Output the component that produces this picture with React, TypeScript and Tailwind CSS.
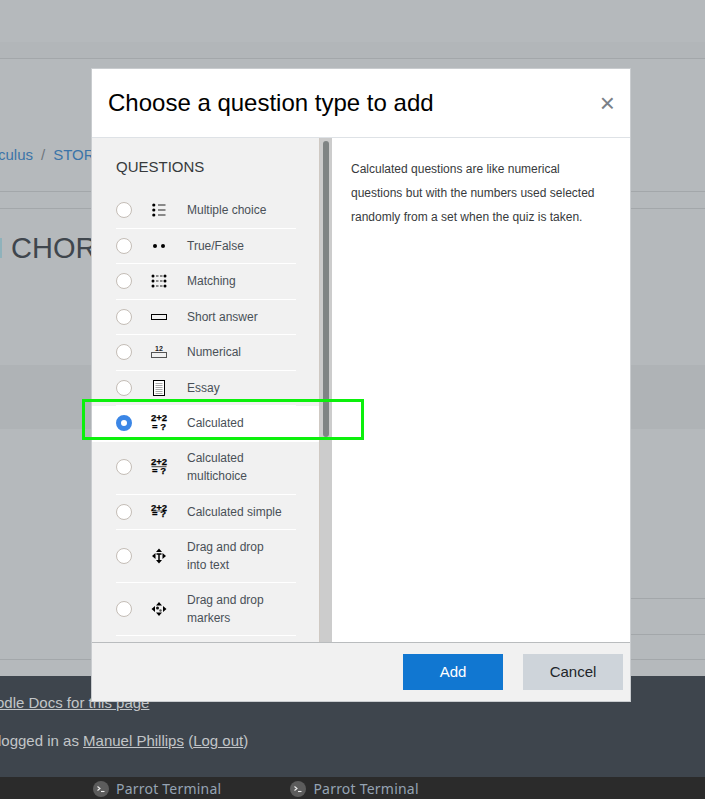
import React from "react";

const F = "font-['Liberation_Sans',Arial,sans-serif]";

function CalcIcon({ variant }: { variant: "plain" | "multi" | "simple" }) {
  const t = { fontSize: 9.5, fontWeight: 700, fontFamily: "Liberation Sans", fill: "#000", stroke: "#000", strokeWidth: 0.25 };
  return (
    <svg width="18" height="18" viewBox="0 0 18 18" className="-mx-px shrink-0">
      <text x="9" y={variant === "simple" ? 7.5 : 7} textAnchor="middle" {...t}>2+2</text>
      {variant === "multi" && <rect x="1.5" y="8.2" width="15" height="1" fill="#444" />}
      <text x="9" y={variant === "simple" ? 14 : 16} textAnchor="middle" {...t}>= ?</text>
      {variant === "simple" && <rect x="3" y="7.5" width="10" height="1" fill="#666" />}
    </svg>
  );
}

const Box = ({ children }: { children: React.ReactNode }) => (
  <svg width="16" height="16" viewBox="0 0 16 16" className="shrink-0">{children}</svg>
);

const icons: Record<string, React.ReactNode> = {
  mc: (
    <Box>
      <circle cx="2.8" cy="3" r="1.6" fill="#000" /><circle cx="2.8" cy="8" r="1.6" fill="#000" /><circle cx="2.8" cy="13" r="1.6" fill="#000" />
      <rect x="7" y="2.5" width="7.5" height="1" fill="#222" /><rect x="7" y="7.5" width="7.5" height="1" fill="#222" /><rect x="7" y="12.5" width="7.5" height="1" fill="#222" />
    </Box>
  ),
  tf: (
    <Box>
      <circle cx="4" cy="8" r="2" fill="#000" /><circle cx="12" cy="8" r="2" fill="#000" />
    </Box>
  ),
  match: (
    <Box>
      {[3, 8, 13].map((y) => (
        <g key={y}>
          <circle cx="2" cy={y} r="1.5" fill="#000" /><circle cx="14" cy={y} r="1.5" fill="#000" />
          <rect x="5" y={y - 0.5} width="2.5" height="1" fill="#222" /><rect x="9" y={y - 0.5} width="2.5" height="1" fill="#222" />
        </g>
      ))}
    </Box>
  ),
  short: (
    <Box>
      <rect x="0.5" y="5.5" width="15" height="5" fill="none" stroke="#000" />
    </Box>
  ),
  num: (
    <Box>
      <text x="8" y="6.5" textAnchor="middle" fontSize="7" fontWeight="700" fontFamily="Liberation Sans" fill="#222">12</text>
      <rect x="0.5" y="8.5" width="15" height="5" fill="none" stroke="#555" />
    </Box>
  ),
  essay: (
    <Box>
      <rect x="2.5" y="0.5" width="11" height="15" fill="#fff" stroke="#000" />
      {[3, 5, 7, 9, 11, 13].map((y) => (
        <rect key={y} x="4.5" y={y} width="7" height="1" fill="#aaa" />
      ))}
    </Box>
  ),
  ddtext: (
    <Box>
      <path d="M8 0.5 11 4H5zM8 15.500 5 12h6zM1 8l3.500-3v6zM15 8l-3.500-3v6z" fill="#000" />
      <path d="M5.500 6h5M8 6v6" stroke="#000" strokeWidth="1.500" fill="none" />
    </Box>
  ),
  ddmark: (
    <Box>
      <path d="M8 1 11 4.500H5zM8 15l-3-3.500h6zM.5 8 4 5v6zM15.500 8 12 5v6z" fill="#000" />
      <circle cx="6.500" cy="7" r="1.500" fill="#111" /><circle cx="9.500" cy="9.500" r="1.200" fill="#555" />
    </Box>
  ),
  c1: <CalcIcon variant="plain" />,
  c2: <CalcIcon variant="multi" />,
  c3: <CalcIcon variant="simple" />,
};

const rows: { icon: string; label: React.ReactNode; selected?: boolean; two?: boolean }[] = [
  { icon: "mc", label: "Multiple choice" },
  { icon: "tf", label: "True/False" },
  { icon: "match", label: "Matching" },
  { icon: "short", label: "Short answer" },
  { icon: "num", label: "Numerical" },
  { icon: "essay", label: "Essay" },
  { icon: "c1", label: "Calculated", selected: true },
  { icon: "c2", label: <>Calculated<br />multichoice</>, two: true },
  { icon: "c3", label: "Calculated simple" },
  { icon: "ddtext", label: <>Drag and drop<br />into text</>, two: true },
  { icon: "ddmark", label: <>Drag and drop<br />markers</>, two: true },
];

function Row({ icon, label, selected, two }: { icon: string; label: React.ReactNode; selected?: boolean; two?: boolean }) {
  return (
    <div className={selected ? "bg-white pl-6" : "pl-6"}>
      <div className={`flex w-[180px] items-center border-b border-white ${two ? "pt-[7.5px] pb-[8.5px]" : "py-[8.25px]"}`}>
        {selected ? (
          <span className="box-border size-4 shrink-0 rounded-full border-[5px] border-[#3b86e6] bg-white" />
        ) : (
          <span className="box-border size-4 shrink-0 rounded-full border border-[#c4bdb6] bg-white" />
        )}
        <span className="ml-[19px] flex size-4 shrink-0 items-center justify-center">{icons[icon]}</span>
        <span className="ml-5 text-[12px] leading-[18px] text-[#495057]">{label}</span>
      </div>
    </div>
  );
}

function Task({ className }: { className?: string }) {
  return (
    <div className={`flex items-center ${className ?? ""}`}>
      <svg width="16" height="16" viewBox="0 0 16 16">
        <circle cx="8" cy="8" r="8" fill="#5c5c5c" />
        <path d="M4.500 5.500 7 7.500 4.500 9.500" stroke="#eee" strokeWidth="1.100" fill="none" />
        <path d="M8 10.500h3.500" stroke="#eee" strokeWidth="1.100" />
      </svg>
      <span className="ml-[7px] font-['Noto_Sans',sans-serif] text-[14px] leading-[22px] tracking-[0.22px] text-[#95a3b3]">Parrot Terminal</span>
    </div>
  );
}

export default function App() {
  return (
    <div className={`relative h-[799px] w-[705px] overflow-hidden bg-[#b5b9bc] ${F}`}>
      {/* Page behind the dialog */}
      <div className="h-[42px]" />
      <div className="h-[17px] border-b border-[#a3a7aa] bg-[#b2b6b9]" />
      <div className="flex h-[133px] items-end whitespace-nowrap border-b border-[#a3a7aa] pb-[25px] text-[15px] leading-[22px] text-[#3b74a8]">
        <span className="-ml-[2px]">culus</span>
        <span className="mx-2 text-[#6f767c]">/</span>
        <span>STORY</span>
      </div>
      <div className="h-[17px] border-b border-[#a3a7aa]" />
      <div className="flex h-[156px] items-start pt-[21px]">
        <span className="h-[20px] w-[2px] translate-y-[8px] bg-[#8fb2bb]" />
        <span className="ml-[9px] text-[29px] leading-[36px] text-[#3f464d]">CHORD</span>
      </div>
      <div className="h-[64px] bg-[#afb3b6]" />
      <div className="h-[169px]" />
      <div className="ml-auto h-[37px] w-[300px] border-t border-b border-[#a3a7aa]" />
      <div className="h-[25px] border-b border-[#a3a7aa]" />
      <div className="h-[16px]" />
      <div className="h-[101px] whitespace-nowrap bg-[#3e454d] text-[15px] text-[#c2c5c8]">
        <div className="pt-[16px] leading-[22px]">
          <span className="-ml-[4px] underline">odle Docs for this page</span>
        </div>
        <div className="pt-[16px] leading-[22px]">
          <span className="-ml-[2px]">logged in as </span>
          <span className="underline">Manuel Phillips</span> (<span className="underline">Log out</span>)
        </div>
      </div>
      <div className="flex h-[22px] bg-[#2b2b2b] pl-[93px] pt-px">
        <Task />
        <Task className="ml-[69px]" />
      </div>

      {/* Dialog */}
      <div className="absolute left-[91px] top-[68px] flex h-[634px] w-[540px] flex-col border border-[#c9cccf] bg-white">
        <div className="flex h-[69px] shrink-0 items-center justify-between border-b border-[#dee2e6] pl-4 pr-[15px]">
          <h2 className="text-[24px] leading-[30px] text-black">Choose a question type to add</h2>
          <span className="text-[26px] leading-[28px] text-[#7a8087]">×</span>
        </div>
        <div className="flex min-h-0 flex-1">
          <div className="w-[228px] shrink-0 overflow-hidden border-r border-[#cfc9c3] bg-[#f1f1f1]">
            <div className="pl-6 pt-[18px] pb-[15px] text-[15px] leading-[22px] text-[#373a3c]">QUESTIONS</div>
            {rows.map((r) => (
              <Row key={r.icon} {...r} />
            ))}
          </div>
          <div className="w-3 shrink-0 bg-[#cccccc] pl-[3px] pt-[3px]">
            <div className="h-[296px] w-[6px] rounded-[3px] bg-[#7f8484]" />
          </div>
          <div className="flex-1 pl-[19px] pr-4 pt-[19px] text-[12px] leading-[24px] text-[#373a3c]">
            Calculated questions are like numerical questions but with the numbers used selected randomly from a set when the quiz is taken.
          </div>
        </div>
        <div className="flex h-[59px] shrink-0 items-start justify-end gap-5 border-t border-[#b9bcbe] bg-[#f1f1f1] pr-[7px] pt-[11px]">
          <button className="h-9 w-[100px] bg-[#1177d1] text-[15px] text-white">Add</button>
          <button className="h-9 w-[100px] bg-[#ced4da] text-[15px] text-[#212529]">Cancel</button>
        </div>
      </div>

      {/* Annotation */}
      <div className="absolute left-[82px] top-[399px] h-[41px] w-[282px] border-[3px] border-[#0cf00c]" />
    </div>
  );
}
